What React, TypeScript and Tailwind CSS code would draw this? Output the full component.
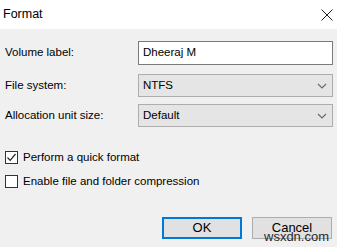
export default function App() {
  const font = { fontFamily: '"Segoe UI", "Liberation Sans", Arial, sans-serif' }

  const Chevron = () => (
    <svg width="10" height="6" viewBox="0 0 10 6" className="mr-[5px]">
      <path d="M1 1 L5 5 L9 1" fill="none" stroke="#6b6b6b" strokeWidth="1.2" />
    </svg>
  )

  return (
    <div
      className="relative h-[247px] w-[337px] overflow-hidden bg-[#f0f0f0] text-[11.5px] text-black"
      style={font}
    >
      <div className="flex h-[29px] items-center justify-between bg-white pl-[3px] pr-[4px]">
        <span className="text-[12.5px] leading-none">Format</span>
        <svg width="12" height="12" viewBox="0 0 12 12">
          <path d="M0.5 0.5 L11.5 11.5 M11.5 0.5 L0.5 11.5" stroke="#222" strokeWidth="1" />
        </svg>
      </div>

      <div className="pl-[5px] pr-[4px] pt-[12px]">
        <div className="flex h-[24px] items-center">
          <span className="w-[133px]">Volume label:</span>
          <div className="flex h-full flex-1 items-center border border-[#7a7a7a] bg-white pl-[4px]">
            Dheeraj M
          </div>
        </div>

        <div className="mt-[9px] flex h-[23px] items-center">
          <span className="w-[133px]">File system:</span>
          <div className="flex h-full flex-1 items-center justify-between border border-[#adadad] bg-[#e5e5e5] pl-[4px]">
            <span>NTFS</span>
            <Chevron />
          </div>
        </div>

        <div className="mt-[7px] flex h-[23px] items-center">
          <span className="w-[133px]">Allocation unit size:</span>
          <div className="flex h-full flex-1 items-center justify-between border border-[#adadad] bg-[#e5e5e5] pl-[4px]">
            <span>Default</span>
            <Chevron />
          </div>
        </div>

        <div className="mt-[24px] flex h-[13px] items-center">
          <div className="flex h-[13px] w-[13px] items-center justify-center border border-[#333] bg-white">
            <svg width="11" height="11" viewBox="0 0 11 11">
              <path d="M1.5 5.5 L4.2 8.3 L9.5 2" fill="none" stroke="#222" strokeWidth="1.2" />
            </svg>
          </div>
          <span className="ml-[5px]">Perform a quick format</span>
        </div>

        <div className="mt-[11px] flex h-[13px] items-center">
          <div className="h-[13px] w-[13px] border border-[#333] bg-white" />
          <span className="ml-[5px]">Enable file and folder compression</span>
        </div>

        <div className="mt-[29px] flex justify-end gap-[10px] pr-px">
          <button className="h-[22px] w-[80px] border-2 border-[#0078d7] bg-[#e1e1e1] pb-px text-[13px] leading-none">
            OK
          </button>
          <button className="h-[22px] w-[80px] border border-[#adadad] bg-[#e1e1e1] pb-[2px] text-[13px] leading-none">
            Cancel
          </button>
        </div>
      </div>

      <span className="absolute left-[264px] top-[230px] text-[13px] leading-none text-[#2a2a2a]">
        wsxdn.com
      </span>
    </div>
  )
}
